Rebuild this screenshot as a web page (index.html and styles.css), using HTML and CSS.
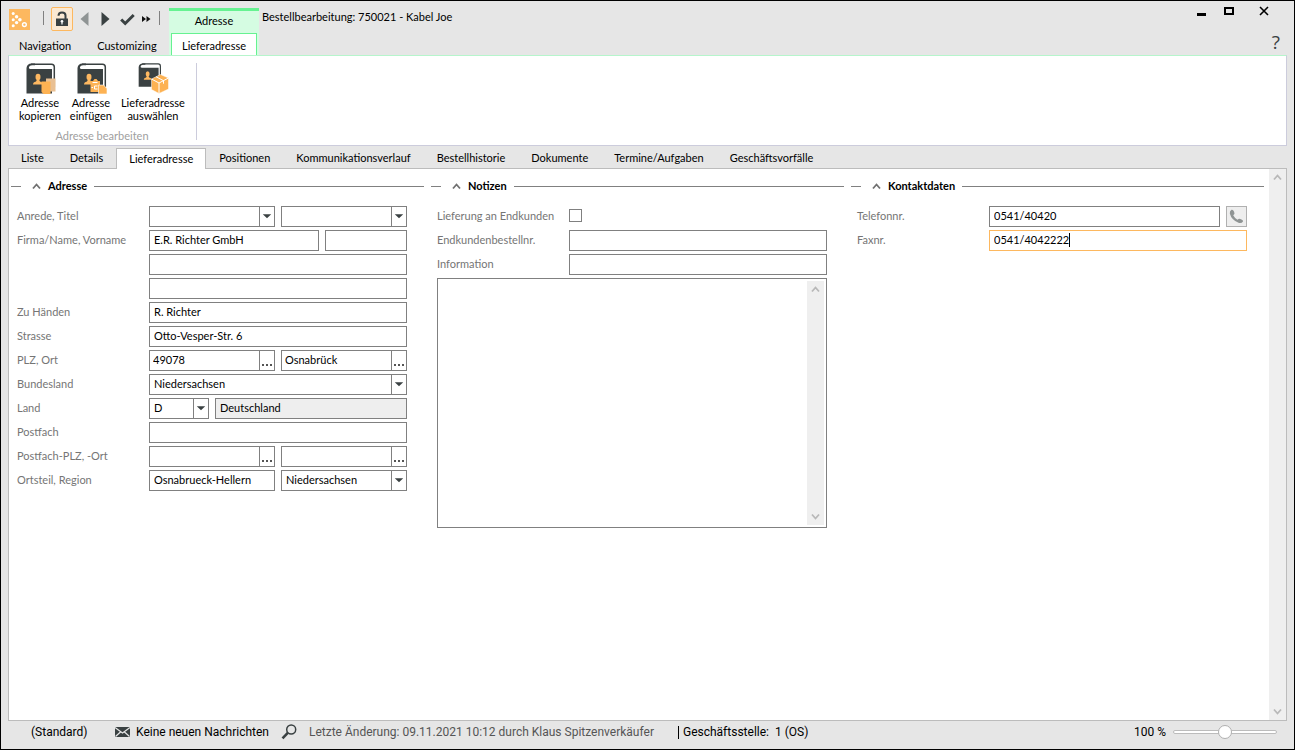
FILE: index.html
```html
<!DOCTYPE html>
<html lang="de">
<head>
<meta charset="utf-8">
<title>Bestellbearbeitung: 750021 - Kabel Joe</title>
<link rel="stylesheet" href="styles.css">
</head>
<body class="window">
<svg class="defs" aria-hidden="true">
  <symbol id="down" viewBox="0 0 15 19"><path d="M3 7h9l-4.500 4.500z" fill="#3a4142"/></symbol>
  <symbol id="chev-up" viewBox="0 0 9 8"><path d="M1 6.500 4.500 2.500 8 6.500" fill="none" stroke="currentColor" stroke-width="1.800"/></symbol>
  <symbol id="chev-down" viewBox="0 0 9 8"><path d="M1 1.500 4.500 5.500 8 1.500" fill="none" stroke="currentColor" stroke-width="1.800"/></symbol>
  <symbol id="book" viewBox="0 0 30 32">
    <path d="M5 1.200H25.500Q28.300 1.200 28.300 4V24" fill="none" stroke="#3a4142" stroke-width="1.500"/>
    <path d="M5.500 .5Q1 .5 .5 5V30.500H26V6H5Q2.500 6 3 4Q3.500 2.500 6 2.300H9V.5Z" fill="#3a4142"/>
    <ellipse cx="12" cy="14" rx="2.500" ry="3.300" fill="#fdb861"/>
    <path d="M7 21.500Q7 19 10 18.500L11 16.500H13L14 18.500Q17 19 17 21.500Z" fill="#fdb861"/>
  </symbol>
</svg>

<header class="titlebar">
  <div class="title-left">
    <div class="quickbar">
      <svg class="logo" viewBox="0 0 21 21"><path fill="#fdb85f" d="M0 0h21v21H0z"/><g fill="#fff"><circle cx="4.200" cy="4.500" r="1.500"/><circle cx="7.600" cy="7.700" r="1.700"/><circle cx="10.900" cy="10.700" r="1.800"/><circle cx="4.200" cy="10.700" r="1.500"/><circle cx="7.600" cy="13.600" r="1.700"/><circle cx="4.200" cy="16.700" r="1.500"/></g><circle cx="15.400" cy="15.600" r="1.900" fill="none" stroke="#fff" stroke-width="1.400"/></svg>
      <span class="bar"></span>
      <button class="qb locked" aria-label="Sperren"><svg width="14" height="16" viewBox="0 0 14 16"><path d="M3.500 4.800Q3.500 1.500 7 1.500T10.500 4.500V8" fill="none" stroke="#3a4142" stroke-width="2"/><path d="M1 7.500h12v7.500H1z" fill="#3a4142"/><circle cx="7" cy="10.300" r="1.300" fill="#fff"/><path d="M6.400 10.500h1.200v3H6.400z" fill="#fff"/></svg></button>
      <button class="qb prev" aria-label="Zurück"><svg width="9" height="16" viewBox="0 0 9 16"><path d="M8.500 1v14L.5 8z" fill="#8f9494"/></svg></button>
      <button class="qb next" aria-label="Weiter"><svg width="9" height="16" viewBox="0 0 9 16"><path d="M.5 1v14l8-7z" fill="#3a4142"/></svg></button>
      <button class="qb ok" aria-label="Speichern"><svg width="15" height="13" viewBox="0 0 15 13"><path d="m1.200 6.500 4 4 8.500-8.500" fill="none" stroke="#3a4142" stroke-width="3"/></svg></button>
      <button class="qb more" aria-label="Mehr"><svg width="9" height="6" viewBox="0 0 9 6"><path d="M0 0 4 3 0 6zM4.500 0l4 3-4 3z" fill="#111"/></svg></button>
      <span class="bar"></span>
    </div>
    <nav class="menu"><a href="#navigation">Navigation</a><a href="#customizing">Customizing</a></nav>
  </div>
  <div class="context">
    <span class="context-name">Adresse</span>
    <a class="context-tab" href="#lieferadresse">Lieferadresse</a>
  </div>
  <h1 class="title">Bestellbearbeitung: 750021 - Kabel Joe</h1>
  <div class="title-right">
    <div class="winbtns">
      <button aria-label="Minimieren"><svg width="10" height="12" viewBox="0 0 10 12"><path d="M0 8h9v3H0z"/></svg></button>
      <button aria-label="Maximieren"><svg width="10" height="12" viewBox="0 0 10 12"><path d="M0 2h10v8H0zM2 4v4h6V4z" fill-rule="evenodd"/></svg></button>
      <button aria-label="Schließen"><svg width="10" height="12" viewBox="0 0 10 12"><path d="m1 2 8 8M9 2l-8 8" stroke="#000" stroke-width="1.600"/></svg></button>
    </div>
    <button class="help" aria-label="Hilfe">?</button>
  </div>
</header>

<section class="ribbon">
  <div class="group">
    <div class="group-buttons">
      <button class="rb"><svg width="32" height="32" viewBox="-2 0 32 32"><use href="#book" width="30" height="32"/><path d="M20 15.500h9.500v13H20z" fill="#e9c093"/><path d="M15.500 18.500h9v12.500h-7l-2-2z" fill="#fdb253"/></svg>Adresse<br>kopieren</button>
      <button class="rb"><svg width="32" height="32" viewBox="-2 0 32 32"><use href="#book" width="30" height="32"/><path d="M13.500 18h2.500l1.500-2h2l1.500 2h2v11h-9.500z" fill="#fdb253"/><path d="M15.500 19.500h5M20.500 23h-3v3h3M16 24.500h-1.500" fill="none" stroke="#fff" stroke-width="1"/><path d="M21.500 22h5l3.500 3.500V31h-8.500z" fill="#fdb253" stroke="#fff" stroke-width=".6"/></svg>Adresse<br>einfügen</button>
      <button class="rb"><svg width="32" height="32" viewBox="0 0 32 32"><use href="#book" x="1" y="0" width="24" height="25"/><path d="m14.500 16 9-4.500 8 3.500v11L22 30.500l-7.500-4z" fill="#fdb253" stroke="#fff" stroke-width=".5"/><path d="m14.500 16 7.500 4 9.500-5M22 20v10.500M19 13.700l7.500 4v3" fill="none" stroke="#fff" stroke-width="1"/></svg>Lieferadresse<br>auswählen</button>
    </div>
    <div class="group-name">Adresse bearbeiten</div>
  </div>
</section>

<nav class="tabs">
  <a href="#liste">Liste</a><a href="#details">Details</a><a class="active" href="#lieferadresse">Lieferadresse</a><a href="#positionen">Positionen</a><a href="#kommunikation">Kommunikationsverlauf</a><a href="#historie">Bestellhistorie</a><a href="#dokumente">Dokumente</a><a href="#termine">Termine/Aufgaben</a><a href="#vorfaelle">Geschäftsvorfälle</a>
</nav>

<main class="page">
  <form class="columns">
    <section class="col">
      <h2 class="legend"><svg width="9" height="8"><use href="#chev-up"/></svg><span>Adresse</span></h2>
      <div class="row"><label for="anrede">Anrede, Titel</label><div class="fields pair">
        <span class="combo"><select id="anrede"><option></option></select><svg><use href="#down"/></svg></span>
        <span class="combo"><select aria-label="Titel"><option></option></select><svg><use href="#down"/></svg></span></div></div>
      <div class="row"><label for="firma">Firma/Name, Vorname</label><div class="fields">
        <input id="firma" class="box wide" value="E.R. Richter GmbH"><input class="box" aria-label="Vorname"></div></div>
      <div class="row"><span></span><div class="fields"><input class="box" aria-label="Name 2"></div></div>
      <div class="row"><span></span><div class="fields"><input class="box" aria-label="Name 3"></div></div>
      <div class="row"><label for="haenden">Zu Händen</label><div class="fields"><input id="haenden" class="box" value="R. Richter"></div></div>
      <div class="row"><label for="strasse">Strasse</label><div class="fields"><input id="strasse" class="box" value="Otto-Vesper-Str. 6"></div></div>
      <div class="row"><label for="plz">PLZ, Ort</label><div class="fields pair">
        <span class="lookup"><input id="plz" value="49078"><button type="button" aria-label="PLZ suchen"><i></i><i></i><i></i></button></span>
        <span class="lookup"><input aria-label="Ort" value="Osnabrück"><button type="button" aria-label="Ort suchen"><i></i><i></i><i></i></button></span></div></div>
      <div class="row"><label for="bundesland">Bundesland</label><div class="fields"><span class="combo"><select id="bundesland"><option>Niedersachsen</option></select><svg><use href="#down"/></svg></span></div></div>
      <div class="row"><label for="land">Land</label><div class="fields">
        <span class="combo short"><select id="land"><option>D</option></select><svg><use href="#down"/></svg></span>
        <input class="box readonly" aria-label="Landname" value="Deutschland" readonly></div></div>
      <div class="row"><label for="postfach">Postfach</label><div class="fields"><input id="postfach" class="box"></div></div>
      <div class="row"><label for="pfplz">Postfach-PLZ, -Ort</label><div class="fields pair">
        <span class="lookup"><input id="pfplz"><button type="button" aria-label="Postfach-PLZ suchen"><i></i><i></i><i></i></button></span>
        <span class="lookup"><input aria-label="Postfach-Ort"><button type="button" aria-label="Postfach-Ort suchen"><i></i><i></i><i></i></button></span></div></div>
      <div class="row"><label for="ortsteil">Ortsteil, Region</label><div class="fields pair">
        <input id="ortsteil" class="box" value="Osnabrueck-Hellern">
        <span class="combo"><select aria-label="Region"><option>Niedersachsen</option></select><svg><use href="#down"/></svg></span></div></div>
    </section>

    <section class="col">
      <h2 class="legend"><svg width="9" height="8"><use href="#chev-up"/></svg><span>Notizen</span></h2>
      <div class="row"><label for="endkunde">Lieferung an Endkunden</label><div class="fields"><input id="endkunde" class="check" type="checkbox"></div></div>
      <div class="row"><label for="endnr">Endkundenbestellnr.</label><div class="fields"><input id="endnr" class="box"></div></div>
      <div class="row"><label for="info">Information</label><div class="fields"><input id="info" class="box"></div></div>
      <div class="memo"><textarea aria-label="Notiztext"></textarea>
        <div class="scroll"><svg width="9" height="8"><use href="#chev-up"/></svg><svg width="9" height="8"><use href="#chev-down"/></svg></div></div>
    </section>

    <section class="col">
      <h2 class="legend"><svg width="9" height="8"><use href="#chev-up"/></svg><span>Kontaktdaten</span></h2>
      <div class="row"><label for="tel">Telefonnr.</label><div class="fields"><input id="tel" class="box" value="0541/40420">
        <button class="call" type="button" aria-label="Anrufen"><svg width="15" height="15" viewBox="0 0 15 15"><path d="M2.500.8Q4 .2 5 2.500T5 5.500L4.200 6.300Q5.500 9 8.500 10.700L9.500 10Q10.500 9.300 12.500 10.500T14 12.500Q12.500 14.800 9.500 13.800Q2.500 11 .8 4.500Q.6 2 2.500.8Z" fill="#8f9494"/></svg></button></div></div>
      <div class="row"><label for="fax">Faxnr.</label><div class="fields"><span class="box focused"><input id="fax" value="0541/4042222" size="12"><i class="caret"></i></span></div></div>
    </section>
  </form>
  <div class="scroll"><svg width="9" height="8"><use href="#chev-up"/></svg><svg width="9" height="8"><use href="#chev-down"/></svg></div>
</main>

<footer class="status">
  <span class="profile">(Standard)</span>
  <span class="news"><svg width="15" height="10" viewBox="0 0 15 10"><path d="M0 0h15v10H0z" fill="#3a4142"/><path d="m0 .5 7.500 5.500L15 .5M.5 9.500 5.500 5m9 4.500L9.500 5" fill="none" stroke="#e6e6e6" stroke-width="1.200"/></svg>Keine neuen Nachrichten</span>
  <svg class="search" width="16" height="16" viewBox="0 0 16 16"><circle cx="10.200" cy="5.500" r="4.500" fill="none" stroke="#3a4142" stroke-width="1.500"/><path d="M7 8.700 1.500 14.300" stroke="#3a4142" stroke-width="2.600"/></svg>
  <span class="changed">Letzte Änderung: 09.11.2021 10:12 durch Klaus Spitzenverkäufer</span>
  <span class="office">Geschäftsstelle: &nbsp;1 (OS)</span>
  <label class="zoom" for="zoom">100 %</label>
  <input id="zoom" class="slider" type="range" min="0" max="200" value="100">
</footer>
</body>
</html>
```
FILE: styles.css
```css
* { box-sizing: border-box; }

.window {
  margin: 0;
  min-height: 100vh;
  display: flex;
  flex-direction: column;
  border: 1px solid #000;
  padding: 0 7px;
  background: #e6e6e6;
  color: #000;
  font: 11px/13px Lato, "Open Sans", sans-serif;
}

.defs { display: none; }
button, input, select, textarea { font: inherit; color: inherit; margin: 0; padding: 0; border: 0; border-radius: 0; background: none; outline: none; }
button { display: flex; align-items: center; justify-content: center; }
a { color: inherit; text-decoration: none; }
svg { flex: none; display: block; }

/* Title bar */
.titlebar { display: flex; height: 54px; padding-top: 6px; }
.title-left { width: 161px; display: flex; flex-direction: column; justify-content: space-between; }
.quickbar { display: flex; align-items: center; height: 24px; padding-left: 1px; }
.logo { width: 21px; height: 21px; }
.bar { width: 1px; height: 14px; margin: 0 7px 3px 13px; background: #808080; }
.bar:last-child { margin: 0 0 3px 8px; }
.qb.locked { width: 22px; height: 24px; border: 1px solid #fdb85f; border-radius: 2px; background: #fbe9d3; }
.prev { margin-left: 7px; }
.next { margin-left: 12px; }
.ok { margin-left: 10px; }
.more { margin-left: 7px; }
.menu { display: flex; gap: 26px; padding: 0 0 3px 11px; }

.context { width: 90px; margin-top: 1px; padding: 0 2px; display: flex; flex-direction: column; background: #d5fce2; border-top: 3px solid #66f291; text-align: center; }
.context-name { flex: 1; line-height: 19px; }
.context-tab { height: 22px; line-height: 24px; background: #fff; border: 1px solid #66f291; border-bottom: 0; }
.title { flex: 1; margin: 3px 0 0 3px; font-size: 11px; font-weight: 400; }
.title-right { display: flex; flex-direction: column; align-items: flex-end; justify-content: space-between; padding: 0 7px 3px 0; }
.winbtns { display: flex; gap: 17px; padding-right: 11px; }
.winbtns button:last-child { margin-left: 8px; }
.winbtns button { height: 8px; }
.help { font: 19px/20px "Open Sans", sans-serif; color: #3a4142; }

/* Ribbon */
.ribbon { height: 91px; background: #fff; border: 1px solid #ccccdc; border-top-color: #b6f5cc; padding: 7px 10px 5px; display: flex; }
.group { display: flex; flex-direction: column; justify-content: space-between; padding-right: 11px; border-right: 1px solid #ccccdc; }
.group-buttons { display: flex; gap: 9px; }
.rb { display: block; text-align: center; line-height: 13px; }
.rb svg { margin: 0 auto 1px; }
.group-name { text-align: center; color: #a0a0a0; line-height: 9px; }

/* Page tabs */
.tabs { display: flex; align-items: flex-end; height: 22px; position: relative; z-index: 1; }
.tabs a { padding: 0 13px; line-height: 20px; }
.tabs .active { height: 21px; margin-bottom: -1px; background: #fff; border: 1px solid #bcbcbc; border-bottom: 0; padding: 0 12px; line-height: 20px; }

.page { flex: 1; display: flex; background: #fff; border: 1px solid #bcbcbc; }
.columns { flex: 1; display: grid; grid-template-columns: repeat(3, minmax(0, 1fr)); gap: 7px; align-items: start; padding: 9px 5px 9px 2px; }
.scroll { width: 17px; display: flex; flex-direction: column; align-items: center; justify-content: space-between; padding: 4px 0; background: #efefef; color: #b8b8b8; }

.col { display: flex; flex-direction: column; gap: 3px; padding: 0 17px 0 6px; }
.legend { display: flex; align-items: center; gap: 7px; height: 16px; margin: 0 -17px 9px -6px; font-size: 11px; font-weight: 700; }
.legend svg { margin-left: 4px; color: #707070; }
.legend span { padding-bottom: 2px; }
.legend::before, .legend::after { content: ""; height: 1px; background: #808080; }
.legend::before { width: 10px; }
.legend::after { flex: 1; }

.row { display: grid; grid-template-columns: 132px minmax(0, 1fr); align-items: center; height: 21px; }
.row label { padding-bottom: 2px; color: #757575; }
.fields { display: flex; align-items: center; gap: 6px; }
.pair { display: grid; grid-template-columns: 1fr 1fr; }
.box, .combo, .lookup { flex: 1; min-width: 0; width: 100%; height: 21px; border: 1px solid #808080; background: #fff; }
.box { padding: 0 4px 2px; }
.wide { flex: 0 0 66%; }
.combo.short { flex: 0 0 60px; }
.readonly { background: #eee; }

.combo { display: grid; grid-template-columns: minmax(0, 1fr) 15px; }
.combo select { grid-area: 1 / 1 / 2 / 3; appearance: none; padding: 0 19px 2px 4px; }
.combo svg { grid-area: 1 / 2; width: 15px; height: 19px; border-left: 1px solid #808080; pointer-events: none; }

.lookup { display: flex; }
.lookup input { flex: 1; min-width: 0; padding: 0 0 2px 3px; }
.lookup button { width: 15px; gap: 2px; align-items: flex-end; padding-bottom: 4px; border-left: 1px solid #808080; }
.lookup i { width: 2px; height: 2px; background: #555; }

.check { appearance: none; width: 13px; height: 13px; margin-bottom: 2px; border: 1px solid #808080; }
.memo { display: flex; height: 250px; padding: 2px; border: 1px solid #808080; }
.memo textarea { flex: 1; resize: none; }
.call { width: 21px; height: 21px; border: 1px solid #b0b0b0; background: #eee; }
.focused { display: flex; align-items: center; border-color: #fdb85f; }
.focused input { field-sizing: content; }
.caret { width: 1px; height: 14px; background: #000; }

/* Status bar */
.status { display: flex; align-items: center; height: 28px; padding: 0 10px 6px 23px; font: 12px/16px Roboto, "Open Sans", sans-serif; }
.profile { width: 84px; }
.news { display: flex; align-items: center; gap: 6px; }
.search { margin: 0 12px; }
.changed { color: #555; }
.office { margin-left: 24px; padding-left: 4px; border-left: 1px solid #000; line-height: 13px; }
.zoom { margin-left: auto; }
.slider { appearance: none; width: 104px; height: 14px; margin-left: 7px; }
.slider::-webkit-slider-runnable-track { height: 4px; border: 1px solid #bcbcbc; border-radius: 2px; background: #fff; }
.slider::-webkit-slider-thumb { appearance: none; width: 14px; height: 14px; margin-top: -6px; border: 1px solid #b0b0b0; border-radius: 50%; background: #fff; }
```
